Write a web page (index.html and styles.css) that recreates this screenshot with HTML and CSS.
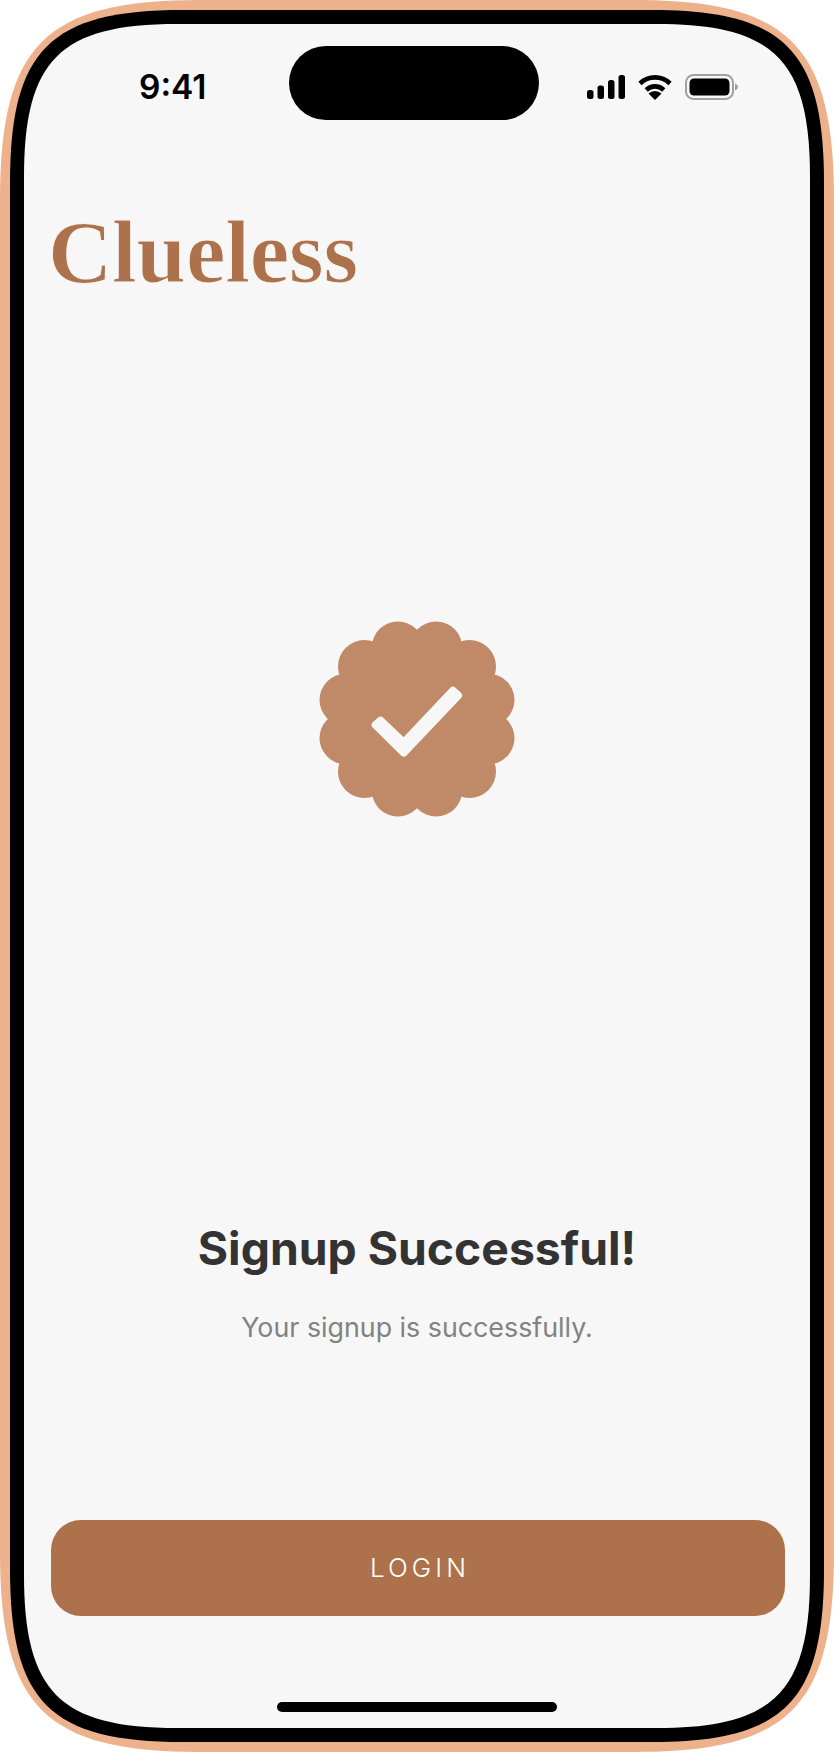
FILE: index.html
```html
<!DOCTYPE html>
<html lang="en">
<head>
<meta charset="utf-8">
<title>Clueless – Signup Successful</title>
<link rel="stylesheet" href="styles.css">
</head>
<body>
<div class="phone">
  <svg class="frame" width="834" height="1752" viewBox="0 0 834 1752" aria-hidden="true">
    <path class="frame-outer" d="M200,0 H634 C789,0 834,45 834,200 V1552 C834,1707 789,1752 634,1752 H200 C45,1752 0,1707 0,1552 V200 C0,45 45,0 200,0Z"/>
    <path class="frame-bezel" d="M183,10 H651 C784,10 824,50 824,183 V1569 C824,1702 784,1742 651,1742 H183 C50,1742 10,1702 10,1569 V183 C10,50 50,10 183,10Z"/>
    <path class="frame-screen" d="M177,24 H657 C774,24 810,60 810,177 V1575 C810,1692 774,1728 657,1728 H177 C60,1728 24,1692 24,1575 V177 C24,60 60,24 177,24Z"/>
  </svg>

  <div class="screen">
    <header class="status">
      <span class="time">9:41</span>
      <div class="island"></div>
      <div class="status-icons">
        <svg class="signal" width="38" height="24" viewBox="0 0 38 24">
          <rect x="0" y="15" width="6.5" height="9" rx="2.5"/>
          <rect x="10.5" y="10.5" width="6.5" height="13.5" rx="2.5"/>
          <rect x="21" y="5" width="6.5" height="19" rx="2.5"/>
          <rect x="31.5" y="0" width="6.5" height="24" rx="2.5"/>
        </svg>
        <svg class="wifi" width="34" height="25" viewBox="0 0 34 25">
          <path class="wifi-arc" d="M2,8.5 A21.5,21.5 0 0 1 32,8.5"/>
          <path class="wifi-arc" d="M8.2,15 A12.5,12.5 0 0 1 25.8,15"/>
          <path d="M17,25 L10.5,18.5 A9.5,9.5 0 0 1 23.5,18.5Z"/>
        </svg>
        <svg class="battery" width="53" height="26" viewBox="0 0 53 26">
          <rect class="battery-case" x="1" y="1" width="47" height="24" rx="7.5"/>
          <rect x="4.5" y="4.5" width="40" height="17" rx="4.5"/>
          <path class="battery-nub" d="M50,9.5 C52,10.5 53,11.5 53,13 C53,14.5 52,15.5 50,16.5Z"/>
        </svg>
      </div>
    </header>

    <h2 class="logo">Clueless</h2>

    <div class="badge-wrap">
      <svg class="badge" width="196" height="196" viewBox="-98 -98 196 196" aria-hidden="true">
        <g class="badge-fill">
          <circle r="76"/>
          <circle cx="19.15" cy="-71.5" r="26"/>
          <circle cx="-19.15" cy="-71.5" r="26"/>
          <circle cx="19.15" cy="71.5" r="26"/>
          <circle cx="-19.15" cy="71.5" r="26"/>
          <circle cx="71.5" cy="19.15" r="26"/>
          <circle cx="71.5" cy="-19.15" r="26"/>
          <circle cx="-71.5" cy="19.15" r="26"/>
          <circle cx="-71.5" cy="-19.15" r="26"/>
          <circle cx="52.5" cy="52.5" r="26.5"/>
          <circle cx="-52.5" cy="52.5" r="26.5"/>
          <circle cx="52.5" cy="-52.5" r="26.5"/>
          <circle cx="-52.5" cy="-52.5" r="26.5"/>
        </g>
        <path class="badge-check" d="M-36.5,1.6 L-41.3,6 L-13.2,33.6 L41,-23.5 L36,-28.2 L-13.2,23.8Z"/>
      </svg>
    </div>

    <section class="message">
      <h1 class="title">Signup Successful!</h1>
      <p class="subtitle">Your signup is successfully.</p>
    </section>

    <button class="login" type="button">LOGIN</button>

    <div class="home-indicator"></div>
  </div>
</div>
</body>
</html>
```
FILE: styles.css
```css
* {
  box-sizing: border-box;
}

html,
body {
  margin: 0;
  padding: 0;
  background: #ffffff;
}

.phone {
  position: relative;
  width: 834px;
  height: 1752px;
  padding: 24px;
  overflow: hidden;
}

.frame {
  position: absolute;
  top: 0;
  left: 0;
}

.frame-outer {
  fill: #edb28b;
}

.frame-bezel {
  fill: #000000;
}

.frame-screen {
  fill: #f7f7f7;
}

.screen {
  position: relative;
  display: flex;
  flex-direction: column;
  height: 1704px;
  padding: 0 27px;
  font-family: Inter, "Liberation Sans", sans-serif;
}

.status {
  display: flex;
  align-items: flex-start;
  margin: 0 -27px;
  padding: 22px 72px 0 115px;
}

.time {
  width: 150px;
  padding-top: 17px;
  font-size: 33.5px;
  font-weight: 600;
  line-height: 48px;
  letter-spacing: 0;
  color: #000000;
}

.island {
  width: 250px;
  height: 74px;
  margin-right: auto;
  border-radius: 37px;
  background: #000000;
}

.status-icons {
  display: flex;
  align-items: center;
  gap: 13px;
  padding-top: 28px;
}

.status-icons svg {
  display: block;
  fill: #000000;
}

.wifi-arc {
  fill: none;
  stroke: #000000;
  stroke-width: 4.6;
}

.battery-case {
  fill: none;
  stroke: #a3a09e;
  stroke-width: 2;
}

.battery-nub {
  fill: #a3a09e;
}

.logo {
  margin: 87px 0 0 -3px;
  font-family: "Liberation Serif", serif;
  font-size: 89px;
  font-weight: 700;
  line-height: 90px;
  letter-spacing: -0.2px;
  color: #ad724b;
  -webkit-text-stroke: 1px #f7f7f7;
}

.badge-wrap {
  display: flex;
  justify-content: center;
  margin-top: 324px;
}

.badge {
  display: block;
}

.badge-fill {
  fill: #c08a68;
}

.badge-check {
  fill: #f7f7f7;
  stroke: #f7f7f7;
  stroke-width: 8;
  stroke-linejoin: round;
}

.message {
  margin-top: 404px;
  text-align: center;
}

.title {
  margin: 0;
  font-size: 46.3px;
  font-weight: 700;
  line-height: 54px;
  color: #333333;
}

.subtitle {
  margin: 34px 0 0;
  font-size: 26.8px;
  font-weight: 400;
  line-height: 36px;
  color: #828282;
}

.login {
  display: block;
  width: 734px;
  height: 96px;
  margin-top: 175px;
  padding: 0 0 2px 4px;
  border: 0;
  border-radius: 30px;
  background: #ad724b;
  font-family: Inter, "Liberation Sans", sans-serif;
  font-size: 26px;
  font-weight: 300;
  letter-spacing: 4.1px;
  color: #ffffff;
}

.home-indicator {
  align-self: center;
  width: 280px;
  height: 10px;
  margin-top: 86px;
  border-radius: 5px;
  background: #000000;
}
```
